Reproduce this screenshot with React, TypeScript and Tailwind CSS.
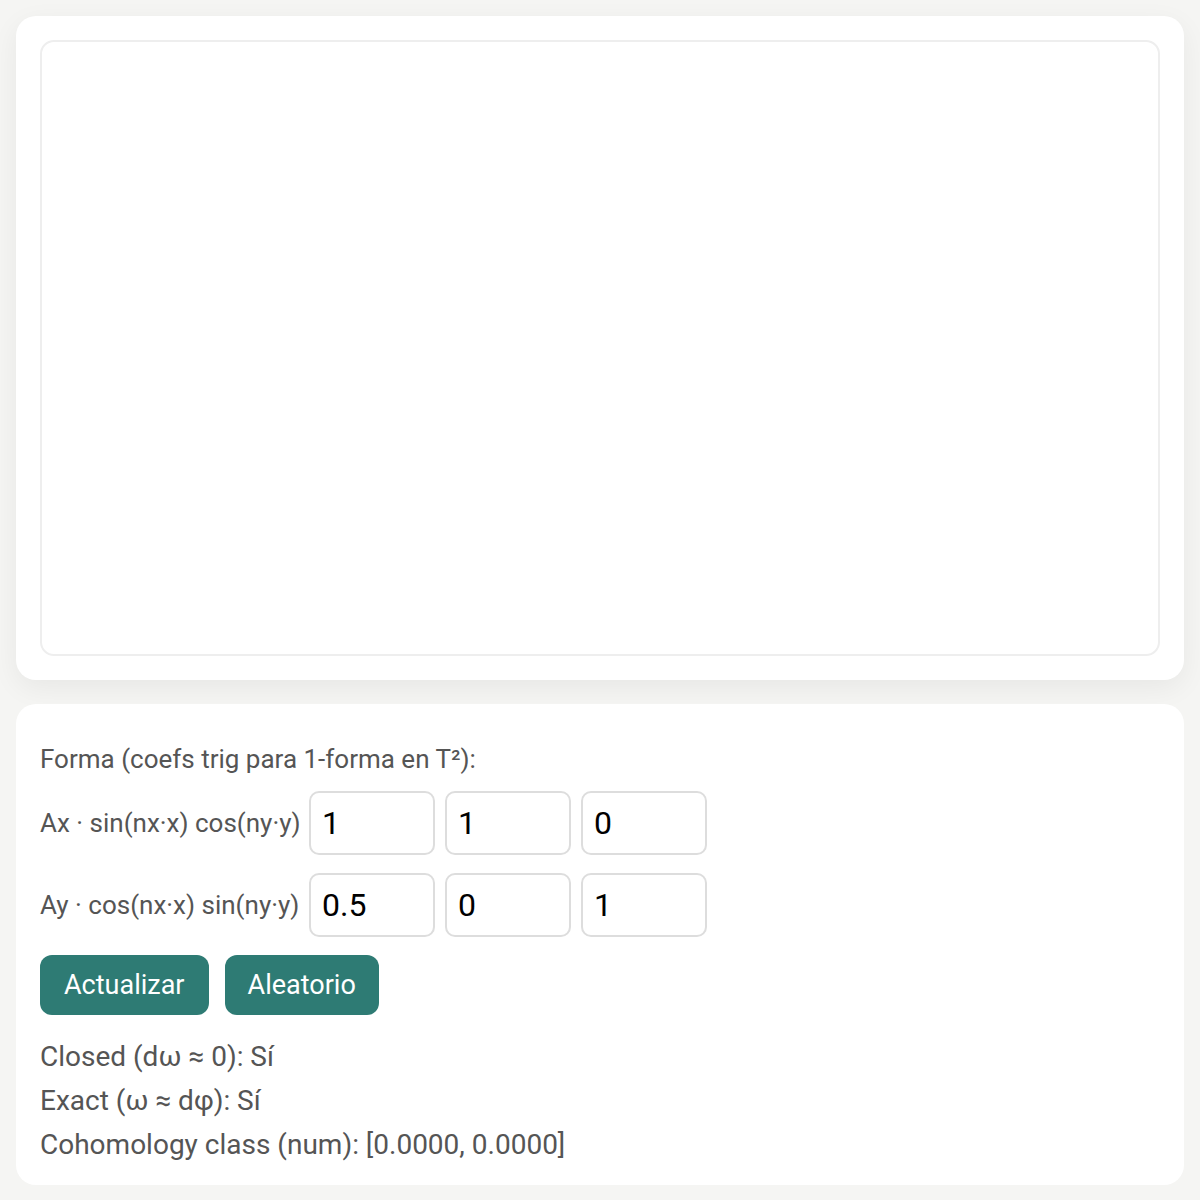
import { useState } from 'react';

const inputCls =
    "w-[126px] h-[64px] border-2 border-[#dddddd] rounded-[10px] px-[11px] text-[32px] text-black bg-white outline-none";

export default function App() {
    const [ax, setAx] = useState(['1', '1', '0']);
    const [ay, setAy] = useState(['0.5', '0', '1']);

    return (
        <div className="min-h-screen bg-[#f5f5f3] p-4 flex flex-col gap-6 font-['Roboto',sans-serif]">
            <div className="bg-white rounded-[20px] p-6 shadow-[0_8px_28px_rgba(0,0,0,0.06)]">
                <div className="h-[616px] border-2 border-[#eeeeee] rounded-[14px] bg-white" />
            </div>

            <div className="bg-white rounded-[20px] px-6 pt-[37px] pb-[18px] text-[#555555]">
                <div className="text-[26px] leading-[36px]">Forma (coefs trig para 1-forma en T²):</div>

                <div className="mt-[14px] flex items-center gap-[10px]">
                    <span className="w-[259px] whitespace-nowrap text-[26px]">Ax · sin(nx·x) cos(ny·y)</span>
                    {ax.map((v, i) => (
                        <input key={i} value={v} onChange={e => setAx(ax.map((x, j) => (j === i ? e.target.value : x)))} className={inputCls} />
                    ))}
                </div>

                <div className="mt-[18px] flex items-center gap-[10px]">
                    <span className="w-[259px] whitespace-nowrap text-[26px]">Ay · cos(nx·x) sin(ny·y)</span>
                    {ay.map((v, i) => (
                        <input key={i} value={v} onChange={e => setAy(ay.map((x, j) => (j === i ? e.target.value : x)))} className={inputCls} />
                    ))}
                </div>

                <div className="mt-[18px] flex gap-4">
                    <button className="h-[60px] px-6 rounded-[12px] bg-[#2e7b74] text-white text-[27px]">Actualizar</button>
                    <button className="h-[60px] px-[23px] rounded-[12px] bg-[#2e7b74] text-white text-[27px]">Aleatorio</button>
                </div>

                <div className="mt-[20px] text-[28px] leading-[44px]">
                    <div>Closed (dω ≈ 0): Sí</div>
                    <div>Exact (ω ≈ dφ): Sí</div>
                    <div>Cohomology class (num): [0.0000, 0.0000]</div>
                </div>
            </div>
        </div>
    );
}
